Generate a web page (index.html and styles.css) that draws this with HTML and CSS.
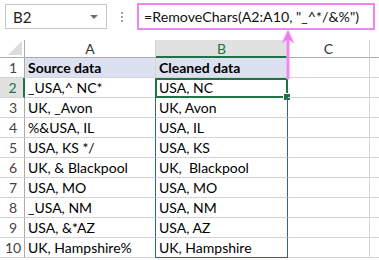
FILE: index.html
```html
<!DOCTYPE html>
<html>
<head>
<meta charset="utf-8">
<link rel="stylesheet" href="styles.css">
</head>
<body>
<div class="app">
  <div class="fbar">
    <div class="namebox"><span>B2</span><span class="caret"></span></div>
    <div class="dots"><i></i><i></i><i></i></div>
    <div class="formula">=RemoveChars(A2:A10, "_^*/&amp;%")</div>
  </div>
  <div class="sheet">
    <div class="corner"><svg width="14" height="14" viewBox="0 0 14 14"><path d="M14 0 L14 14 L0 14 Z" fill="#dcdcdc"/></svg></div>
    <div class="ch">A</div>
    <div class="ch sel">B</div>
    <div class="ch">C</div>
    <div class="ch last"></div>

    <div class="rh">1</div>
    <div class="c hd">Source data</div>
    <div class="c hd">Cleaned data</div>
    <div class="c"></div><div class="c last"></div>

    <div class="rh sel">2</div>
    <div class="c">_USA,^ NC*</div>
    <div class="c b active">USA, NC<span class="handle"></span></div>
    <div class="c"></div><div class="c last"></div>

    <div class="rh">3</div>
    <div class="c">UK, _Avon</div>
    <div class="c b">UK, Avon</div>
    <div class="c"></div><div class="c last"></div>

    <div class="rh">4</div>
    <div class="c">%&amp;USA, IL</div>
    <div class="c b">USA, IL</div>
    <div class="c"></div><div class="c last"></div>

    <div class="rh">5</div>
    <div class="c">USA, KS */</div>
    <div class="c b">USA, KS</div>
    <div class="c"></div><div class="c last"></div>

    <div class="rh">6</div>
    <div class="c">UK, &amp; Blackpool</div>
    <div class="c b">UK,&nbsp; Blackpool</div>
    <div class="c"></div><div class="c last"></div>

    <div class="rh">7</div>
    <div class="c">USA, MO</div>
    <div class="c b">USA, MO</div>
    <div class="c"></div><div class="c last"></div>

    <div class="rh">8</div>
    <div class="c">_USA, NM</div>
    <div class="c b">USA, NM</div>
    <div class="c"></div><div class="c last"></div>

    <div class="rh">9</div>
    <div class="c">USA, &amp;*AZ</div>
    <div class="c b">USA, AZ</div>
    <div class="c"></div><div class="c last"></div>

    <div class="rh">10</div>
    <div class="c">UK, Hampshire%</div>
    <div class="c b bottom">UK, Hampshire</div>
    <div class="c"></div><div class="c last"></div>
  </div>
  <svg class="arrow" width="16" height="52" viewBox="0 0 16 52">
    <path d="M8 1 L14 14 L9.2 11 L9.2 50 L6.8 50 L6.8 11 L2 14 Z" fill="#f07cf0" stroke="#f6a6f6" stroke-width="0.8"/>
  </svg>
</div>
</body>
</html>
```

FILE: styles.css
```css
html, body {
  margin: 0;
  padding: 0;
  background: #fff;
}
.app {
  position: relative;
  width: 379px;
  height: 260px;
  overflow: hidden;
  font-family: Lato, "Open Sans", sans-serif;
  color: #000;
}
.fbar {
  display: flex;
  align-items: center;
  height: 34px;
  padding-left: 5px;
  padding-top: 0;
}
.namebox {
  box-sizing: border-box;
  width: 102px;
  height: 25px;
  border: 1px solid #c6c6c6;
  display: flex;
  align-items: center;
  justify-content: space-between;
  padding: 0 8px 0 7px;
  font-size: 15px;
  color: #222;
  margin-top: -1px;
}
.caret {
  width: 0;
  height: 0;
  border-left: 4px solid transparent;
  border-right: 4px solid transparent;
  border-top: 4px solid #707070;
}
.dots {
  width: 30px;
  display: flex;
  flex-direction: column;
  align-items: center;
  gap: 2px;
}
.dots i {
  display: block;
  width: 2px;
  height: 2px;
  background: #a0a0a0;
}
.formula {
  box-sizing: border-box;
  width: 238px;
  height: 27px;
  border: 2px solid #f383f3;
  margin-left: 0;
  padding-left: 5px;
  font-size: 14.2px;
  line-height: 23px;
  color: #111;
  white-space: nowrap;
  margin-top: -2px;
}
.sheet {
  margin-top: 6px;
  display: grid;
  grid-template-columns: 25px 131px 132px 82px 9px;
  grid-template-rows: 18px repeat(10, 20px);
  font-size: 14px;
}
.corner {
  border-right: 1px solid #ababab;
  border-bottom: 1px solid #ababab;
  display: flex;
  align-items: flex-end;
  justify-content: flex-end;
  padding: 0 2px 2px 0;
}
.ch {
  border-right: 1px solid #d4d4d4;
  border-bottom: 1px solid #ababab;
  text-align: center;
  font-size: 14px;
  line-height: 18px;
  color: #333;
}
.ch.sel {
  background: #e1e1e1;
  color: #217346;
  border-bottom: 2px solid #217346;
  border-right-color: #ababab;
}
.ch.last, .c.last {
  border-right: none;
}
.rh {
  border-right: 1px solid #ababab;
  border-bottom: 1px solid #d4d4d4;
  text-align: center;
  line-height: 20px;
  font-size: 14px;
  color: #444;
  padding-left: 2px;
}
.rh.sel {
  background: #e1e1e1;
  color: #217346;
  border-right: 2px solid #217346;
}
.c {
  position: relative;
  border-right: 1px solid #d4d4d4;
  border-bottom: 1px solid #d4d4d4;
  padding-left: 3px;
  line-height: 20px;
  white-space: nowrap;
}
.c.hd {
  background: #dce1f1;
  font-weight: bold;
}
.c.b {
  border-left: 1px solid #2f5db3;
  border-right: 1px solid #2f5db3;
  margin-left: -1px;
}
.c.bottom {
  border-bottom: 1px solid #2f5db3;
}
.c.active {
  border: 2px solid #217346;
  margin-left: -1px;
  padding-left: 2px;
  line-height: 16px;
}
.handle {
  position: absolute;
  right: -5px;
  bottom: -5px;
  width: 6px;
  height: 6px;
  background: #217346;
  border: 1px solid #fff;
}
.arrow {
  position: absolute;
  left: 280px;
  top: 29px;
}
```
